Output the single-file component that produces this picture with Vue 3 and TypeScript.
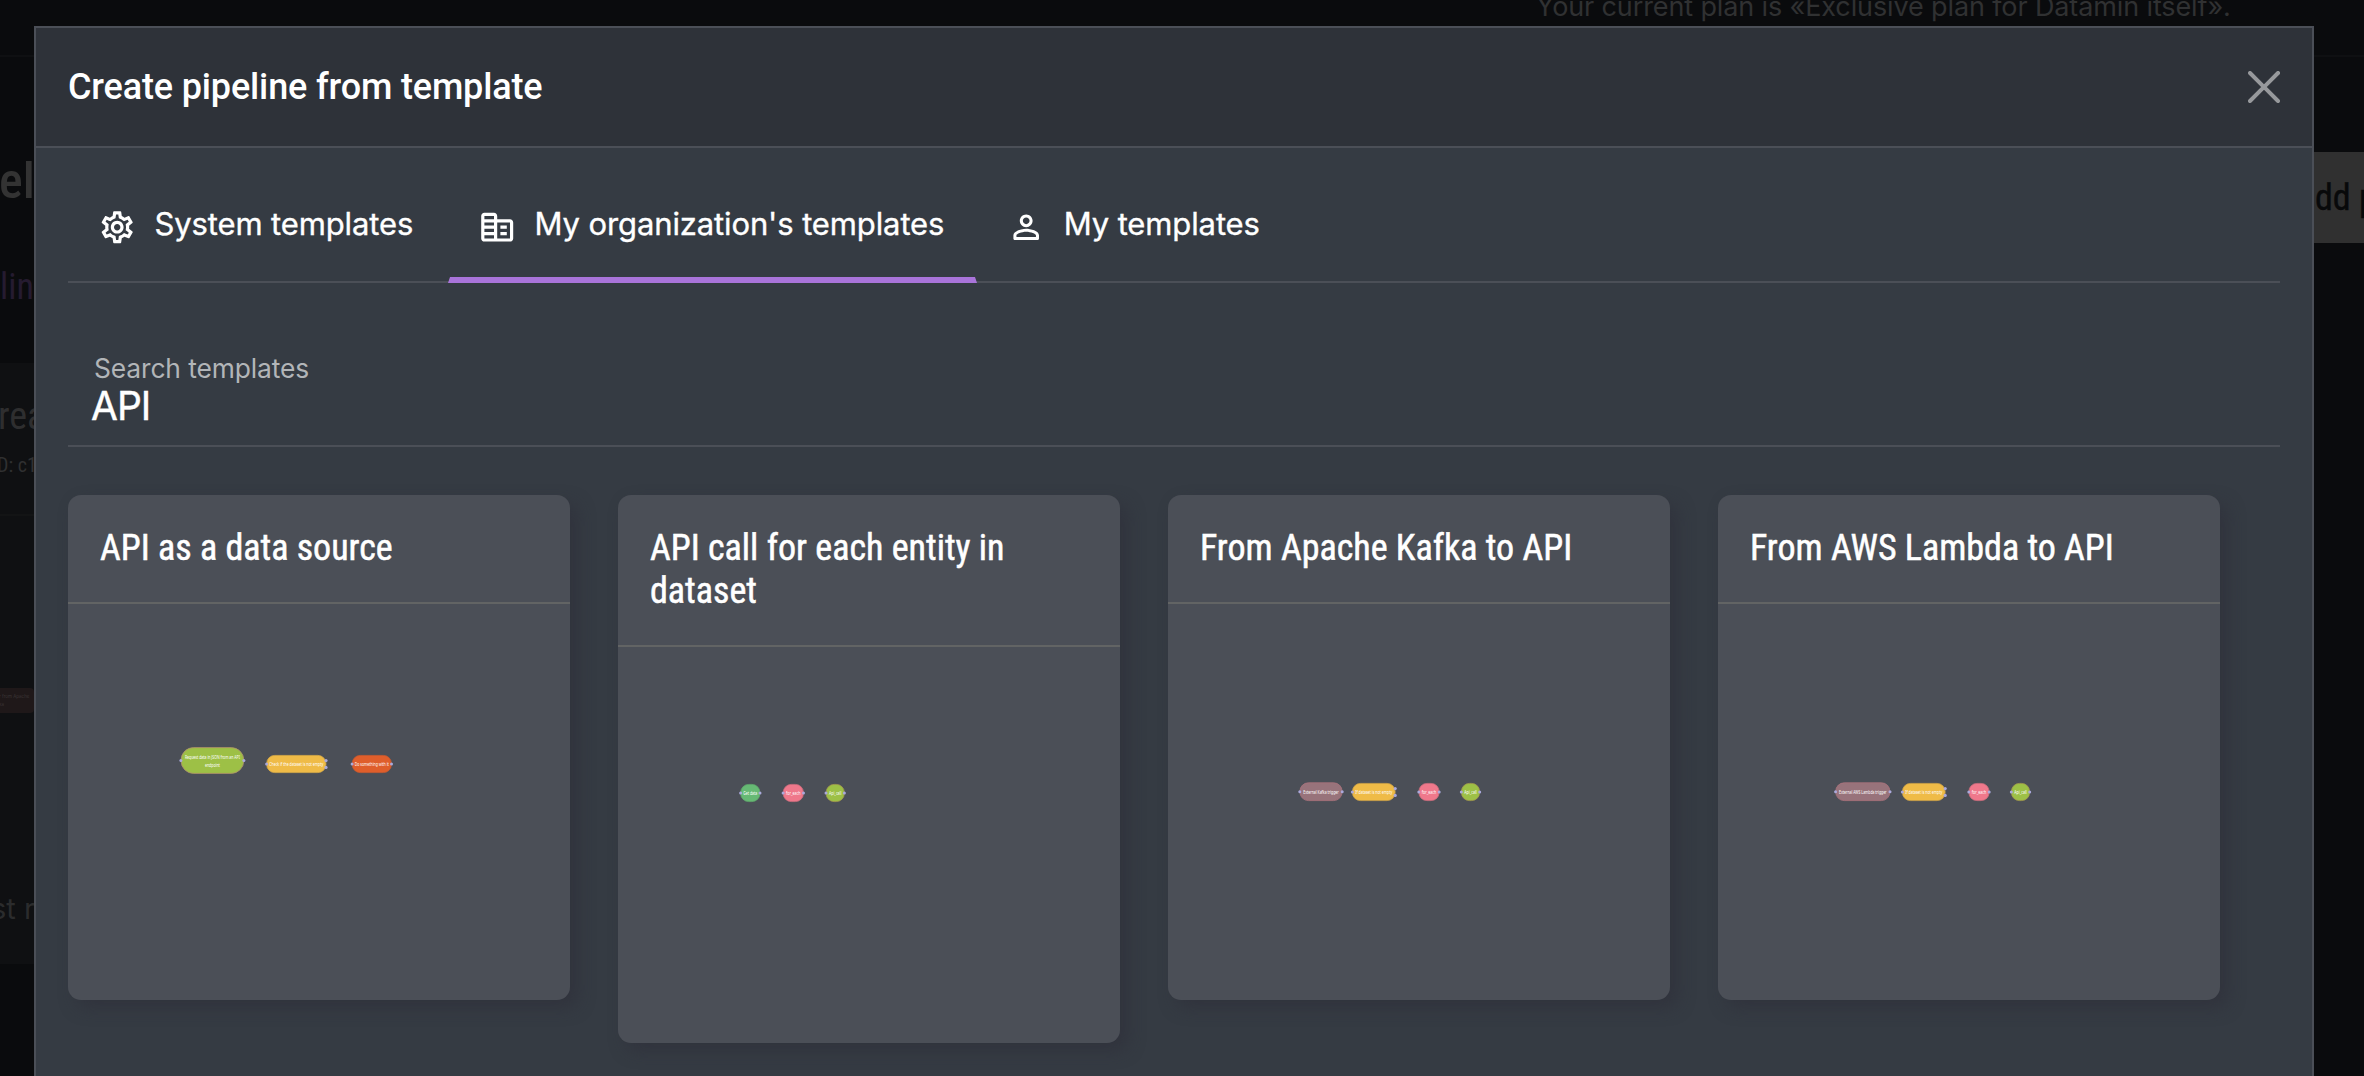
<script setup lang="ts">
import { ref } from 'vue'

interface PipelineNode {
  x: number
  y: number
  w: number
  h: number
  r: number
  fill: string
  stroke: string
  lines: string[]
  textWidth: number
  branches?: boolean
}
interface Template {
  title: string
  nodes: PipelineNode[]
}

const GREEN = '#9dc046'
const YELLOW = '#efbb47'
const PINK = '#ef788b'
const MAUVE = '#98737b'

const ifNode = (x: number): PipelineNode => ({
  x, y: 179, w: 43.5, h: 18, r: 8, fill: YELLOW, stroke: '#cfa347', lines: ['If dataset is not empty'], textWidth: 37, branches: true,
})
const forEach = (x: number, y: number): PipelineNode => ({
  x, y, w: 21, h: 18, r: 8, fill: PINK, stroke: '#cf6d7d', lines: ['for_each'], textWidth: 14.5,
})
const apiCall = (x: number, y: number): PipelineNode => ({
  x, y, w: 19, h: 18, r: 8, fill: GREEN, stroke: '#a59a4c', lines: ['Api_call'], textWidth: 12.5,
})

const templates: Template[] = [
  {
    title: 'API as a data source',
    nodes: [
      { x: 112.6, y: 143.2, w: 63.6, h: 26.6, r: 12.5, fill: GREEN, stroke: '#b08f6c', lines: ['Request data in JSON from an API', 'endpoint'], textWidth: 55 },
      { x: 198.3, y: 151, w: 60, h: 18, r: 8, fill: YELLOW, stroke: '#d8ab47', lines: ['Check if the dataset is not empty'], textWidth: 54, branches: true },
      { x: 283.8, y: 151, w: 40, h: 18, r: 8, fill: '#df5e2b', stroke: '#c9592f', lines: ['Do something with it'], textWidth: 34 },
    ],
  },
  {
    title: 'API call for each entity in dataset',
    nodes: [
      { x: 122.3, y: 137, w: 20, h: 18, r: 8, fill: '#66b974', stroke: '#5faa6c', lines: ['Get data'], textWidth: 14 },
      forEach(164.8, 137),
      apiCall(207.7, 137),
    ],
  },
  {
    title: 'From Apache Kafka to API',
    nodes: [
      { x: 131.5, y: 178.4, w: 43, h: 18.6, r: 8.5, fill: MAUVE, stroke: '#ac727c', lines: ['External Kafka trigger'], textWidth: 35.5 },
      ifNode(184), forEach(250.5, 179), apiCall(293, 179),
    ],
  },
  {
    title: 'From AWS Lambda to API',
    nodes: [
      { x: 117.3, y: 178.4, w: 55, h: 18.6, r: 8.5, fill: MAUVE, stroke: '#ac727c', lines: ['External AWS Lambda trigger'], textWidth: 47.5 },
      ifNode(184), forEach(250.5, 179), apiCall(293, 179),
    ],
  },
]

const tabs = [
  {
    label: 'System templates',
    icon: 'M19.43 12.98c.04-.32.07-.64.07-.98 0-.34-.03-.66-.07-.98l2.11-1.65c.19-.15.24-.42.12-.64l-2-3.46c-.09-.16-.26-.25-.44-.25-.06 0-.12.01-.17.03l-2.49 1c-.52-.4-1.08-.73-1.69-.98l-.38-2.65C14.46 2.18 14.25 2 14 2h-4c-.25 0-.46.18-.49.42l-.38 2.65c-.61.25-1.17.59-1.69.98l-2.49-1c-.06-.02-.12-.03-.18-.03-.17 0-.34.09-.43.25l-2 3.46c-.13.22-.07.49.12.64l2.11 1.65c-.04.32-.07.65-.07.98 0 .33.03.66.07.98l-2.11 1.65c-.19.15-.24.42-.12.64l2 3.46c.09.16.26.25.44.25.06 0 .12-.01.17-.03l2.49-1c.52.4 1.08.73 1.69.98l.38 2.65c.03.24.24.42.49.42h4c.25 0 .46-.18.49-.42l.38-2.65c.61-.25 1.17-.59 1.69-.98l2.49 1c.06.02.12.03.18.03.17 0 .34-.09.43-.25l2-3.46c.12-.22.07-.49-.12-.64l-2.11-1.65zm-1.98-1.71c.04.31.05.52.05.73 0 .21-.02.43-.05.73l-.14 1.13.89.7 1.08.84-.7 1.21-1.27-.51-1.04-.42-.9.68c-.43.32-.84.56-1.25.73l-1.06.43-.16 1.13-.2 1.35h-1.4l-.19-1.35-.16-1.13-1.06-.43c-.43-.18-.83-.41-1.23-.71l-.91-.7-1.06.43-1.27.51-.7-1.21 1.08-.84.89-.7-.14-1.13c-.03-.31-.05-.54-.05-.74s.02-.43.05-.73l.14-1.13-.89-.7-1.08-.84.7-1.21 1.27.51 1.04.42.9-.68c.43-.32.84-.56 1.25-.73l1.06-.43.16-1.13.2-1.35h1.39l.19 1.35.16 1.13 1.06.43c.43.18.83.41 1.23.71l.91.7 1.06-.43 1.27-.51.7 1.21-1.07.85-.89.7.14 1.13zM12 8c-2.21 0-4 1.79-4 4s1.79 4 4 4 4-1.79 4-4-1.79-4-4-4zm0 6c-1.1 0-2-.9-2-2s.9-2 2-2 2 .9 2 2-.9 2-2 2z',
  },
  {
    label: "My organization's templates",
    icon: 'M12 7V5c0-1.1-.9-2-2-2H4c-1.1 0-2 .9-2 2v14c0 1.1.9 2 2 2h16c1.1 0 2-.9 2-2V9c0-1.1-.9-2-2-2h-8zM10 19H4v-2h6v2zm0-4H4v-2h6v2zm0-4H4V9h6v2zm0-4H4V5h6v2zm10 12h-8V9h8v10zm-2-8h-4v2h4v-2zm0 4h-4v2h4v-2z',
  },
  {
    label: 'My templates',
    icon: 'M12 5.9c1.16 0 2.1.94 2.1 2.1s-.94 2.1-2.1 2.1S9.9 9.16 9.9 8s.94-2.1 2.1-2.1m0 9c2.97 0 6.1 1.46 6.1 2.1v1.1H5.9V17c0-.64 3.13-2.1 6.1-2.1M12 4C9.79 4 8 5.79 8 8s1.79 4 4 4 4-1.79 4-4-1.79-4-4-4zm0 9c-2.67 0-8 1.34-8 4v2c0 .55.45 1 1 1h14c.55 0 1-.45 1-1v-2c0-2.66-5.33-4-8-4z',
  },
]

const activeTab = ref(1)
const search = ref('API')
</script>

<template>
  <div class="screen">
    <div class="page" aria-hidden="true">
      <p class="plan">Your current plan is «Exclusive plan for Datamin itself».</p>
      <div class="topline"></div>
      <span class="bg-text heading">el</span>
      <span class="bg-text link">lin</span>
      <div class="bg-card">
        <span class="bg-text card-name">rea</span>
        <span class="bg-text card-id">D: c1</span>
        <div class="bg-line"></div>
        <div class="bg-node"><span>r from Apache</span><span>ka</span></div>
        <span class="bg-text last-run">st r</span>
      </div>
      <div class="bg-button">dd p</div>
    </div>

    <section class="modal" role="dialog">
      <header class="modal-header">
        <h1>Create pipeline from template</h1>
        <svg class="close" viewBox="0 0 16 16"><path d="M.293.293a1 1 0 0 1 1.414 0L8 6.586 14.293.293a1 1 0 1 1 1.414 1.414L9.414 8l6.293 6.293a1 1 0 0 1-1.414 1.414L8 9.414l-6.293 6.293a1 1 0 0 1-1.414-1.414L6.586 8 .293 1.707a1 1 0 0 1 0-1.414z" /></svg>
      </header>

      <div class="modal-body">
        <nav class="tabs">
          <button v-for="(tab, i) in tabs" :key="tab.label" class="tab" :class="{ active: i === activeTab }" @click="activeTab = i">
            <svg viewBox="0 0 24 24"><path :d="tab.icon" /></svg>
            <span>{{ tab.label }}</span>
          </button>
        </nav>

        <label class="search">
          <span>Search templates</span>
          <input v-model="search" type="text" spellcheck="false" />
        </label>

        <div class="cards">
          <article v-for="t in templates" :key="t.title" class="card">
            <h2>{{ t.title }}</h2>
            <svg class="diagram" viewBox="0 0 502 396" width="502" height="396">
              <g v-for="(n, i) in t.nodes" :key="i" :transform="`translate(${n.x} ${n.y})`">
                <rect x="0.4" y="0.4" :width="n.w - 0.8" :height="n.h - 0.8" :rx="n.r" :ry="n.r" :fill="n.fill" :stroke="n.stroke" stroke-width="0.8" />
                <circle cx="0.3" :cy="n.h / 2" r="1.5" class="port" />
                <circle v-if="!n.branches" :cx="n.w - 0.3" :cy="n.h / 2" r="1.5" class="port" />
                <template v-else>
                  <circle :cx="n.w - 0.3" :cy="n.h / 2 - 3.4" r="1.6" class="port" />
                  <circle :cx="n.w - 0.3" :cy="n.h / 2 + 3.4" r="1.6" class="port" />
                </template>
                <text
                  v-for="(line, j) in n.lines"
                  :key="line"
                  :x="n.w / 2"
                  :y="n.h / 2 + 2.3 + (j - (n.lines.length - 1) / 2) * 8"
                  :textLength="j === 0 ? n.textWidth : 15"
                  lengthAdjust="spacingAndGlyphs"
                >{{ line }}</text>
              </g>
            </svg>
          </article>
        </div>
      </div>
    </section>
  </div>
</template>

<style>
body {
  margin: 0;
  background: #0a0b0d;
  overflow: hidden;
}
</style>

<style scoped>
.screen {
  position: relative;
  width: 2364px;
  height: 1076px;
  overflow: hidden;
  background: #0a0b0d;
  font-family: Inter, 'Noto Sans', sans-serif;
  color: #fff;
}

/* page behind the dialog, dimmed by the backdrop */
.page {
  position: absolute;
  inset: 0;
}
.page > *,
.bg-card > * {
  position: absolute;
  margin: 0;
  white-space: nowrap;
}
.plan {
  left: 1536px;
  top: -10px;
  font-size: 27px;
  line-height: 34px;
  letter-spacing: -0.12px;
  color: #303132;
}
.topline {
  left: 0;
  top: 55px;
  width: 100%;
  height: 2px;
  background: #0f1012;
}
.bg-text {
  font-family: 'Roboto Condensed', Roboto, sans-serif;
}
.heading {
  left: -1px;
  top: 151px;
  font-size: 50px;
  line-height: 60px;
  font-weight: 500;
  color: #333;
}
.link {
  left: 0;
  top: 266px;
  font-size: 36px;
  line-height: 43px;
  color: #251b30;
}
.bg-card {
  left: 0;
  top: 363px;
  width: 100px;
  height: 601px;
  background: #0f1012;
}
.card-name {
  left: -2px;
  top: 30px;
  font-size: 38px;
  line-height: 46px;
  color: #2e2e2f;
}
.card-id {
  left: -3px;
  top: 90px;
  font-size: 20px;
  line-height: 24px;
  color: #303031;
}
.bg-line {
  left: 0;
  top: 151px;
  width: 100%;
  height: 2px;
  background: #131415;
}
.bg-node {
  left: -30px;
  top: 325px;
  width: 64px;
  height: 25px;
  border-radius: 4px;
  background: #1f1819;
  color: #3b3536;
  font-size: 4.5px;
  line-height: 8px;
  padding-top: 5px;
  box-sizing: border-box;
}
.bg-node span {
  display: block;
  padding-left: 29px;
}
.last-run {
  left: -9px;
  top: 526px;
  font-family: Inter, sans-serif;
  font-size: 29px;
  line-height: 40px;
  color: #2b2c2d;
}
.bg-button {
  left: 2290px;
  top: 152px;
  width: 80px;
  height: 91px;
  padding-left: 25px;
  box-sizing: border-box;
  background: #303030;
  color: #08090a;
  font-family: 'Roboto Condensed', sans-serif;
  font-size: 36px;
  line-height: 92px;
  -webkit-text-stroke: 0.4px currentColor;
}

.modal {
  position: relative;
  width: 2280px;
  height: 1100px;
  margin: 26px 0 0 34px;
  box-sizing: border-box;
  border: 2px solid #4b4f57;
  background: #353b43;
}
.modal-header {
  display: flex;
  align-items: center;
  justify-content: space-between;
  height: 120px;
  padding: 0 32px;
  box-sizing: border-box;
  border-bottom: 2px solid #4b4f57;
  background: #2e3239;
}
.modal-header h1 {
  margin: 0;
  font: 500 36px/55px Roboto, sans-serif;
  letter-spacing: -0.15px;
}
.close {
  width: 32px;
  height: 32px;
  fill: #97999c;
}
.modal-body {
  padding: 48px 32px 0;
}

.tabs {
  display: flex;
  height: 85px;
  border-bottom: 2px solid #4b4f57;
}
.tab {
  display: flex;
  align-items: flex-start;
  height: 87px;
  padding: 12px 31px 0 28px;
  box-sizing: border-box;
  border: 0 solid transparent;
  border-width: 0 2px 6px;
  background: none;
  color: #fff;
  font: 400 31px/38px Inter, sans-serif;
  letter-spacing: -0.12px;
}
.tab:first-child {
  padding-right: 33px;
}
.tab.active {
  border-bottom-color: #a974da;
}
.tab svg {
  width: 38.4px;
  height: 38.4px;
  margin: 0 18px 0 0;
  fill: currentColor;
  flex: none;
}
.tab span {
  margin-top: -3px;
  white-space: nowrap;
  -webkit-text-stroke: 0.35px currentColor;
}

.search {
  display: block;
  height: 164px;
  padding: 68px 24px 0;
  box-sizing: border-box;
  border-bottom: 2px solid #4b4f57;
}
.search span {
  display: block;
  padding-left: 2px;
  font-size: 26.4px;
  line-height: 34px;
  letter-spacing: -0.12px;
  color: #b2b5b8;
}
.search input {
  display: block;
  width: 100%;
  height: 44px;
  margin: -1px 0 0 -1px;
  padding: 0;
  border: 0;
  outline: 0;
  background: none;
  color: #fff;
  font: 400 39px/44px Inter, sans-serif;
  letter-spacing: -1px;
  -webkit-text-stroke: 0.4px currentColor;
}

.cards {
  display: flex;
  align-items: flex-start;
  gap: 48px;
  margin-top: 48px;
}
.card {
  flex: none;
  width: 502px;
  border-radius: 13px;
  background: #4b4f57;
  box-shadow: 8px 8px 16px rgba(46, 46, 56, 0.55);
}
.card h2 {
  margin: 0;
  padding: 32px;
  border-bottom: 2px solid #626464;
  font: 400 36px/43px 'Roboto Condensed', Roboto, sans-serif;
  -webkit-text-stroke: 0.5px currentColor;
}
.diagram {
  display: block;
}
.diagram text {
  font: 5px 'Noto Sans', sans-serif;
  text-anchor: middle;
  fill: #fff;
}
.port {
  fill: #aaa9dc;
}
</style>
